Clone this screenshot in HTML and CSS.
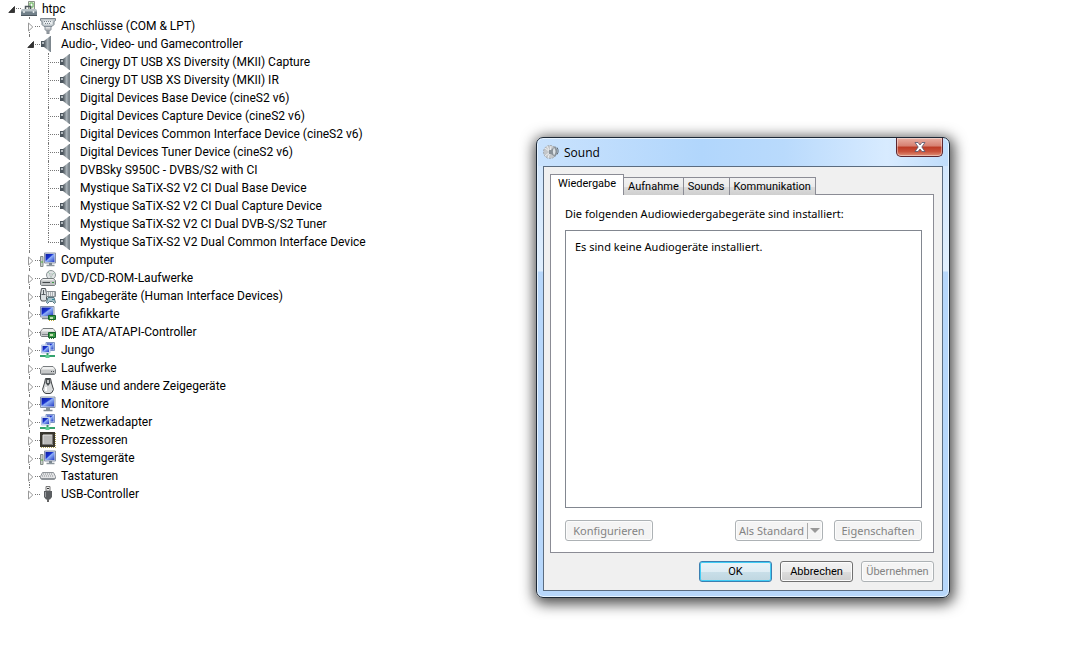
FILE: index.html
```
<!DOCTYPE html>
<html lang="de">
<head>
  <meta charset="UTF-8">
  <meta name="viewport" content="width=device-width, initial-scale=1.0">
  <title>Geräte-Manager</title>
  <link rel="stylesheet" href="styles.css">
</head>
<body>
  <svg class="defs" aria-hidden="true">
    <defs>
      <linearGradient id="g-metal" x1="0" y1="0" x2="0" y2="1">
        <stop offset="0" stop-color="#f4f5f6"/><stop offset="1" stop-color="#9a9ea2"/>
      </linearGradient>
      <linearGradient id="g-horn" x1="0" y1="0" x2="1" y2="0">
        <stop offset="0" stop-color="#4f585f"/><stop offset="0.6" stop-color="#aab3b9"/><stop offset="1" stop-color="#79838a"/>
      </linearGradient>
      <linearGradient id="g-screen" x1="0" y1="0" x2="1" y2="1">
        <stop offset="0" stop-color="#0c1ca0"/><stop offset="0.4" stop-color="#1a34d0"/><stop offset="0.5" stop-color="#8fb0f8"/><stop offset="1" stop-color="#2038c0"/>
      </linearGradient>
      <symbol id="i-open" viewBox="0 0 8 12"><path d="M6.500 3.500v6H.8z" fill="#333" stroke="#111" stroke-width=".7"/></symbol>
      <symbol id="i-closed" viewBox="0 0 8 12"><path d="M1.500 3v8l4.300-4z" fill="#fff" stroke="#999"/></symbol>
      <symbol id="i-pc" viewBox="0 0 16 16">
        <path d="M7.500 .5h6v11h-6z" fill="#e3ebdc" stroke="#8b9589"/>
        <path d="M9 2h3v4H9z" fill="#fff" stroke="#5caf50"/>
        <path d="M4.500 8V5.500h5V8" fill="none" stroke="#50585e" stroke-width="1.500"/>
        <path d="M1 8h14l1 3v4H0v-4z" fill="#718089"/>
        <path d="M1 8h14l.6 2.500H.4z" fill="#b7c1c6"/>
        <path d="M0 14.500h16" stroke="#4c575f"/>
        <path d="M3 10v2M12.500 10v2" stroke="#e6ebed" stroke-width="1.500"/>
      </symbol>
      <symbol id="i-port" viewBox="0 0 16 16">
        <path d="M.5 .5h15v2l-1.500 1v3l-2 2h-8l-2-2v-3l-1.500-1z" fill="#bcc3c8" stroke="#7b858c"/>
        <path d="M3.500 2.500h9v4h-9z" fill="#e8ecee"/>
        <path d="M4 3.500h8M5 5.500h6" stroke="#77818a" stroke-dasharray="1 1"/>
        <path d="M5 8.500h6v3l-1.500 1.500h-3L5 11.500z" fill="url(#g-metal)" stroke="#87909a"/>
        <path d="M7 13v3h2v-3" fill="#9ba2a8" stroke="#858c92"/>
      </symbol>
      <symbol id="i-speaker" viewBox="0 0 16 16">
        <path d="M1 5h4v6H1z" fill="#4c565e"/>
        <path d="M2 6h2v2H2z" fill="#b5bcc1"/>
        <path d="M4 5 10 .3v15.400L4 11z" fill="url(#g-horn)"/>
        <path d="M10.500 0v16" stroke="#7d878e"/>
      </symbol>
      <symbol id="i-monitor" viewBox="0 0 16 16">
        <path d="M.5 1h14.500v10.500H.5z" fill="#dbe2ee" stroke="#8793a8"/>
        <path d="M1.500 2h12.500v8.500H1.500z" fill="url(#g-screen)"/>
        <path d="M6 12h4v2H6z" fill="#87929b"/>
        <path d="M3.500 14.500h9" stroke="#7d8890" stroke-width="1.500"/>
      </symbol>
      <symbol id="i-computer" viewBox="0 0 16 16">
        <path d="M.5 4.500H3v10H.5z" fill="#c8d0cb" stroke="#848d88"/>
        <path d="M1 10h2" stroke="#53b13e"/>
        <path d="M4.500 1h11v10h-11z" fill="#d4dced" stroke="#8992a6"/>
        <path d="M5.500 2h9v8h-9z" fill="url(#g-screen)"/>
        <path d="M9 11h3v2H9z" fill="#7a858e"/><path d="M6.500 13.500h8" stroke="#8b959c" stroke-width="1.500"/>
      </symbol>
      <symbol id="i-drive" viewBox="0 0 16 16">
        <path d="M3 6.500h10l2.500 3v4l-1 1h-13l-1-1v-4z" fill="#c6c8c9" stroke="#777b7e"/>
        <path d="M3 7h10l2 2.500H1z" fill="#eff0f0"/>
        <path d="M1.500 13.500h13" stroke="#96999c"/><path d="M11 11.500h3" stroke="#4b5054" stroke-dasharray="1 1"/>
      </symbol>
      <symbol id="i-dvd" viewBox="0 0 16 16">
        <circle cx="11" cy="5" r="4.500" fill="#dfe3e4" stroke="#8d9699"/>
        <path d="M11 5 8 2M11 5l3.500-2M11 5v4" stroke="#a4c7b2"/><circle cx="11" cy="5" r="1.200" fill="#fff" stroke="#8d9699" stroke-width=".6"/>
        <path d="M3 8.500h10l2.500 2v4l-1 1h-13l-1-1v-4z" fill="#bfc2c3" stroke="#757a7d"/>
        <path d="M3 9h10l2 1.500H1z" fill="#eff0f0"/>
        <path d="M2.500 12.500H10" stroke="#43484b"/><path d="M12 12.500h2" stroke="#3e9e48"/>
      </symbol>
      <symbol id="i-hid" viewBox="0 0 16 16">
        <path d="M1.500 .5h4l1 5v6l-1 1.500h-4L.5 11V6z" fill="#dce0e2" stroke="#4d5357"/>
        <path d="M3.500 2v4M1.500 6.500h4" stroke="#555b60"/>
        <path d="M6.500 3.500h9v5h-9z" fill="#e8eaeb" stroke="#868d91"/>
        <path d="M8 5h7M8 7h7" stroke="#6f777c" stroke-dasharray="1 1"/>
        <path d="M8 9.500h6l1.500 5-1 1-2-2h-3l-2 2-1-1z" fill="#a8c5cd" stroke="#54747e"/>
        <path d="M12 11.500h2" stroke="#2d8c9c"/>
      </symbol>
      <symbol id="i-gpu" viewBox="0 0 16 16">
        <path d="M.5 .5h13.500v10.500H.5z" fill="#dbe2ee" stroke="#8793a8"/>
        <path d="M1.500 1.500h11.500v8.500H1.500z" fill="url(#g-screen)"/>
        <path d="M2 12.500h6" stroke="#7d8890" stroke-width="1.500"/>
        <path d="M8.500 9.500h7v4h-7z" fill="#379542" stroke="#14602b"/>
        <path d="M10 11h3v2h-3z" fill="#c2deb1"/><path d="M9 14.500h6" stroke="#c2a83e" stroke-dasharray="1 1"/>
      </symbol>
      <symbol id="i-ide" viewBox="0 0 16 16">
        <path d="M3 4.500h10l2.500 3v4l-1 1h-13l-1-1v-4z" fill="#c6c8c9" stroke="#777b7e"/>
        <path d="M3 5h10l2 2.500H1z" fill="#eff0f0"/><path d="M2 10.500h6" stroke="#80858a"/>
        <path d="M8.500 8.500h7v5h-7z" fill="#3b9b46" stroke="#14602b"/>
        <path d="M10 10h3v2h-3z" fill="#c2deb1"/><path d="M9 14.500h6" stroke="#327939" stroke-dasharray="1 1"/>
      </symbol>
      <symbol id="i-net" viewBox="0 0 16 16">
        <path d="M6 .5h8.500v8H6z" fill="#c5d6f6" stroke="#7d93c4"/><path d="M7 1.500h6.500v6H7z" fill="url(#g-screen)"/>
        <path d="M1.500 3H10v8H1.500z" fill="#dbe4f6" stroke="#b4c4e6"/><path d="M2.500 4h6.500v6H2.500z" fill="url(#g-screen)"/>
        <path d="M7.500 11v2" stroke="#399567" stroke-width="2"/><path d="M0 14h15" stroke="#35a36f" stroke-width="2"/><path d="M5.500 13h4v3h-4z" fill="#5ccd93"/>
      </symbol>
      <symbol id="i-mouse" viewBox="0 0 16 16">
        <path d="M5.500 .5h5l1 4.500 2 6.500-1.500 3-2 1h-4l-2-1-1.500-3L4.500 5z" fill="#d8dadb" stroke="#3f4346"/>
        <path d="M6 1h4l.5 4L8 8 5.500 5z" fill="#4a4f52"/><path d="M8 2v3" stroke="#eee" stroke-width="1.500"/>
        <path d="M6 9v4" stroke="#fff" stroke-width="2"/>
      </symbol>
      <symbol id="i-cpu" viewBox="0 0 16 16">
        <path d="M0 0h15v15H0z" fill="#38362f"/><path d="M1 15.500h15M15.500 1v14" stroke="#b4a65d" stroke-dasharray="1 1"/>
        <path d="M3 3h9.500v9.500H3z" fill="#b9b9b8" stroke="#e5e5e3"/><path d="M3 12.500h9.500V3" fill="none" stroke="#777"/>
      </symbol>
      <symbol id="i-keyboard" viewBox="0 0 16 16">
        <path d="M2.500 4.500h11l2 4v2l-1 1h-13l-1-1v-2z" fill="#e2e3e5" stroke="#90959a"/>
        <path d="M3 6h10M2 8h12" stroke="#8b9094" stroke-dasharray="1 1"/><path d="M1 10.500h14" stroke="#8d9297"/>
      </symbol>
      <symbol id="i-usb" viewBox="0 0 16 16">
        <path d="M6 .5h4V5H6z" fill="#eee" stroke="#777"/><path d="M7 2.500h2" stroke="#333"/>
        <path d="M4 5h8v6l-2 2.500H6L4 11z" fill="#5b5e61"/><path d="M5.500 6v5" stroke="#9a9da0"/><path d="M8 13v3" stroke="#666" stroke-width="2"/>
      </symbol>
      <symbol id="i-sound" viewBox="0 0 16 16">
        <circle cx="7" cy="8" r="6.500" fill="#c4c7ca" stroke="#a3a8ad" stroke-dasharray="2 1"/>
        <path d="M2 4l5 4-5 4M4 2l3 6-2 6M8 2 7 8" fill="none" stroke="#eceef0"/>
        <path d="M6 6h2l4-4c3 3 3 7 0 11L8 10H6z" fill="#8a9299"/><path d="M11 3.500c2 3 2 5 0 8-1.500-3-1.500-5 0-8z" fill="#dce1e5"/>
        <path d="M14 3.500c1.500 2 1.500 5 0 7" fill="none" stroke="#646d75"/>
      </symbol>
    </defs>
  </svg>

  <main class="desktop">
    <nav class="tree" aria-label="Geräte">
      <div class="row root-row"><svg class="toggle"><use href="#i-open"/></svg><span class="dots"></span><svg class="icon"><use href="#i-pc"/></svg><span>htpc</span></div>
      <ul class="branch">
        <li><div class="row"><svg class="toggle"><use href="#i-closed"/></svg><span class="dots"></span><svg class="icon"><use href="#i-port"/></svg><span>Anschlüsse (COM &amp; LPT)</span></div></li>
        <li>
          <div class="row"><svg class="toggle"><use href="#i-open"/></svg><span class="dots"></span><svg class="icon"><use href="#i-speaker"/></svg><span>Audio-, Video- und Gamecontroller</span></div>
          <ul class="branch leaves">
            <li><div class="row"><span class="dots"></span><svg class="icon"><use href="#i-speaker"/></svg><span>Cinergy DT USB XS Diversity (MKII) Capture</span></div></li>
            <li><div class="row"><span class="dots"></span><svg class="icon"><use href="#i-speaker"/></svg><span>Cinergy DT USB XS Diversity (MKII) IR</span></div></li>
            <li><div class="row"><span class="dots"></span><svg class="icon"><use href="#i-speaker"/></svg><span>Digital Devices Base Device (cineS2 v6)</span></div></li>
            <li><div class="row"><span class="dots"></span><svg class="icon"><use href="#i-speaker"/></svg><span>Digital Devices Capture Device (cineS2 v6)</span></div></li>
            <li><div class="row"><span class="dots"></span><svg class="icon"><use href="#i-speaker"/></svg><span>Digital Devices Common Interface Device (cineS2 v6)</span></div></li>
            <li><div class="row"><span class="dots"></span><svg class="icon"><use href="#i-speaker"/></svg><span>Digital Devices Tuner Device (cineS2 v6)</span></div></li>
            <li><div class="row"><span class="dots"></span><svg class="icon"><use href="#i-speaker"/></svg><span>DVBSky S950C - DVBS/S2 with CI</span></div></li>
            <li><div class="row"><span class="dots"></span><svg class="icon"><use href="#i-speaker"/></svg><span>Mystique SaTiX-S2 V2 CI Dual Base Device</span></div></li>
            <li><div class="row"><span class="dots"></span><svg class="icon"><use href="#i-speaker"/></svg><span>Mystique SaTiX-S2 V2 CI Dual Capture Device</span></div></li>
            <li><div class="row"><span class="dots"></span><svg class="icon"><use href="#i-speaker"/></svg><span>Mystique SaTiX-S2 V2 CI Dual DVB-S/S2 Tuner</span></div></li>
            <li><div class="row"><span class="dots"></span><svg class="icon"><use href="#i-speaker"/></svg><span>Mystique SaTiX-S2 V2 Dual Common Interface Device</span></div></li>
          </ul>
        </li>
        <li><div class="row"><svg class="toggle"><use href="#i-closed"/></svg><span class="dots"></span><svg class="icon"><use href="#i-computer"/></svg><span>Computer</span></div></li>
        <li><div class="row"><svg class="toggle"><use href="#i-closed"/></svg><span class="dots"></span><svg class="icon"><use href="#i-dvd"/></svg><span>DVD/CD-ROM-Laufwerke</span></div></li>
        <li><div class="row"><svg class="toggle"><use href="#i-closed"/></svg><span class="dots"></span><svg class="icon"><use href="#i-hid"/></svg><span>Eingabegeräte (Human Interface Devices)</span></div></li>
        <li><div class="row"><svg class="toggle"><use href="#i-closed"/></svg><span class="dots"></span><svg class="icon"><use href="#i-gpu"/></svg><span>Grafikkarte</span></div></li>
        <li><div class="row"><svg class="toggle"><use href="#i-closed"/></svg><span class="dots"></span><svg class="icon"><use href="#i-ide"/></svg><span>IDE ATA/ATAPI-Controller</span></div></li>
        <li><div class="row"><svg class="toggle"><use href="#i-closed"/></svg><span class="dots"></span><svg class="icon"><use href="#i-net"/></svg><span>Jungo</span></div></li>
        <li><div class="row"><svg class="toggle"><use href="#i-closed"/></svg><span class="dots"></span><svg class="icon"><use href="#i-drive"/></svg><span>Laufwerke</span></div></li>
        <li><div class="row"><svg class="toggle"><use href="#i-closed"/></svg><span class="dots"></span><svg class="icon"><use href="#i-mouse"/></svg><span>Mäuse und andere Zeigegeräte</span></div></li>
        <li><div class="row"><svg class="toggle"><use href="#i-closed"/></svg><span class="dots"></span><svg class="icon"><use href="#i-monitor"/></svg><span>Monitore</span></div></li>
        <li><div class="row"><svg class="toggle"><use href="#i-closed"/></svg><span class="dots"></span><svg class="icon"><use href="#i-net"/></svg><span>Netzwerkadapter</span></div></li>
        <li><div class="row"><svg class="toggle"><use href="#i-closed"/></svg><span class="dots"></span><svg class="icon"><use href="#i-cpu"/></svg><span>Prozessoren</span></div></li>
        <li><div class="row"><svg class="toggle"><use href="#i-closed"/></svg><span class="dots"></span><svg class="icon"><use href="#i-computer"/></svg><span>Systemgeräte</span></div></li>
        <li><div class="row"><svg class="toggle"><use href="#i-closed"/></svg><span class="dots"></span><svg class="icon"><use href="#i-keyboard"/></svg><span>Tastaturen</span></div></li>
        <li><div class="row"><svg class="toggle"><use href="#i-closed"/></svg><span class="dots"></span><svg class="icon"><use href="#i-usb"/></svg><span>USB-Controller</span></div></li>
      </ul>
    </nav>

    <section class="dialog" role="dialog" aria-labelledby="dialog-title">
      <header class="title-bar">
        <svg class="icon"><use href="#i-sound"/></svg>
        <h1 id="dialog-title">Sound</h1>
        <button class="close-button" aria-label="Schließen">
          <svg viewBox="0 0 12 10"><path d="M1 .5h3l2 2.500L8 .5h3L7.800 5 11 9.500H8L6 7 4 9.500H1L4.200 5z" fill="#fff" stroke="#53566e" stroke-width=".8"/></svg>
        </button>
      </header>
      <div class="client">
        <div class="tabs" role="tablist">
          <button class="tab active" role="tab" aria-selected="true">Wiedergabe</button>
          <button class="tab" role="tab">Aufnahme</button>
          <button class="tab" role="tab">Sounds</button>
          <button class="tab" role="tab">Kommunikation</button>
        </div>
        <div class="panel" role="tabpanel">
          <p class="hint">Die folgenden Audiowiedergabegeräte sind installiert:</p>
          <div class="device-list">Es sind keine Audiogeräte installiert.</div>
          <div class="panel-buttons">
            <button class="button wide" disabled>Konfigurieren</button>
            <button class="button wide split" disabled><span>Als Standard</span><svg viewBox="0 0 13 16"><path d="M.5 0v16" stroke="#aaa"/><path d="M3 5h10L8 10z" fill="#999"/></svg></button>
            <button class="button wide" disabled>Eigenschaften</button>
          </div>
        </div>
        <footer class="dialog-buttons">
          <button class="button default">OK</button>
          <button class="button">Abbrechen</button>
          <button class="button" disabled>Übernehmen</button>
        </footer>
      </div>
    </section>
  </main>
</body>
</html>
```
FILE: styles.css
```
* {
  box-sizing: border-box;
}
body {
  margin: 0;
  background: #fff;
  color: #000;
  font-family: Roboto, "Noto Sans", sans-serif;
  font-size: 12px;
}
button {
  font-family: inherit;
  color: inherit;
}
.defs {
  position: absolute;
  width: 0;
  height: 0;
}
.desktop {
  display: flex;
  align-items: flex-start;
  min-height: 100vh;
}

/* device tree */
.tree {
  flex: 0 0 536px;
  padding-left: 8px;
}
.branch {
  list-style: none;
  margin: 0;
  padding-left: 19px;
}
.branch li {
  position: relative;
}
.branch li::before {
  content: "";
  position: absolute;
  left: 2px;
  top: 0;
  bottom: 0;
  border-left: 1px dotted #777;
}
.branch li:last-child::before {
  bottom: auto;
  height: 9px;
}
.row {
  display: flex;
  align-items: center;
  height: 18px;
  line-height: 18px;
  white-space: nowrap;
}
.root-row {
  height: 17px;
}
.toggle {
  position: relative;
  flex: none;
  width: 8px;
  height: 12px;
  background: #fff;
}
.dots {
  width: 5px;
  border-top: 1px dotted #777;
}
.leaves .dots {
  width: 11px;
  margin-left: 2px;
}
.icon {
  flex: none;
  width: 16px;
  height: 16px;
  margin-right: 5px;
}

/* sound dialog */
.dialog {
  width: 414px;
  margin-top: 137px;
  padding: 0 6px 6px;
  border: 1px solid #1c2836;
  border-radius: 7px;
  background:
    linear-gradient(90deg, #c9e2fd, #b1d6fc 40%, #b9dafc 60%, #d8ebff 85%, #c0ddfb) no-repeat 0 0 / 100% 28px,
    linear-gradient(#cfe5fd, #e0effe 133px, #b7d7fb 134px);
  box-shadow: inset 0 0 0 1px #e6f3ff, 1px 3px 14px 3px rgba(0, 0, 0, 0.7);
}
.title-bar {
  display: flex;
  align-items: center;
  height: 28px;
}
.title-bar h1 {
  flex: 1;
  margin: 0;
  font-family: "Open Sans", sans-serif;
  font-size: 12px;
  font-weight: normal;
}
.close-button {
  display: flex;
  align-self: flex-start;
  align-items: center;
  justify-content: center;
  width: 47px;
  height: 19px;
  padding: 0;
  border: 1px solid #5b2630;
  border-top: 0;
  border-radius: 0 0 5px 5px;
  background: linear-gradient(#e9b0a4, #d67f70 45%, #bc3a25 50%, #c9523b 75%, #e09279);
  box-shadow: inset 0 0 0 1px rgba(255, 255, 255, 0.4);
}
.close-button svg {
  width: 12px;
  height: 10px;
}
.client {
  padding: 7px 8px 8px 6px;
  border: 1px solid #5b6c80;
  background: #f0f0f0;
}
.tabs {
  display: flex;
  align-items: flex-end;
  height: 21px;
}
.tab {
  height: 18px;
  padding: 0 4px;
  border: 1px solid #8b8c95;
  border-left-width: 0;
  border-bottom: 0;
  background: linear-gradient(#f2f2f2, #ebebeb 50%, #dcdcdc 51%, #cfcfcf);
  font-size: 11px;
  line-height: 16px;
}
.tab.active {
  position: relative;
  z-index: 1;
  height: 21px;
  padding: 0 7px 2px;
  border-left-width: 1px;
  background: #fff;
}
.panel {
  margin-top: -1px;
  padding: 11px 11px 11px 14px;
  border: 1px solid #8b8c95;
  background: #fff;
  font-family: "Noto Sans", sans-serif;
  font-size: 11px;
}
.hint {
  margin: 0 0 8px;
  line-height: 16px;
}
.device-list {
  height: 278px;
  padding: 8px 9px;
  border: 1px solid #828790;
  line-height: 16px;
}
.panel-buttons {
  display: flex;
  gap: 11px;
  margin-top: 12px;
}
.panel-buttons .button:first-child {
  margin-right: auto;
}
.dialog-buttons {
  display: flex;
  justify-content: flex-end;
  gap: 8px;
  margin-top: 8px;
}
.button {
  width: 73px;
  height: 21px;
  padding: 0;
  border: 1px solid #707070;
  border-radius: 3px;
  background: linear-gradient(#f2f2f2, #ebebeb 50%, #dddddd 51%, #cfcfcf);
  box-shadow: inset 0 0 0 1px #fcfcfc;
  font-size: 11px;
  line-height: 18px;
}
.button.wide {
  width: 88px;
}
.button.default {
  border-color: #3c7fb1;
  background: linear-gradient(#eaf3f8, #dfedf4 50%, #c9dfe9 51%, #bfd6e0);
  box-shadow: inset 0 0 0 1px #42cdf5;
}
.button:disabled {
  border-color: #adb2b5;
  background: #f4f4f4;
  color: #838383;
}
.split {
  display: flex;
  align-items: center;
  justify-content: space-between;
  padding: 0 2px 0 3px;
}
.split svg {
  width: 13px;
  height: 16px;
}
```
